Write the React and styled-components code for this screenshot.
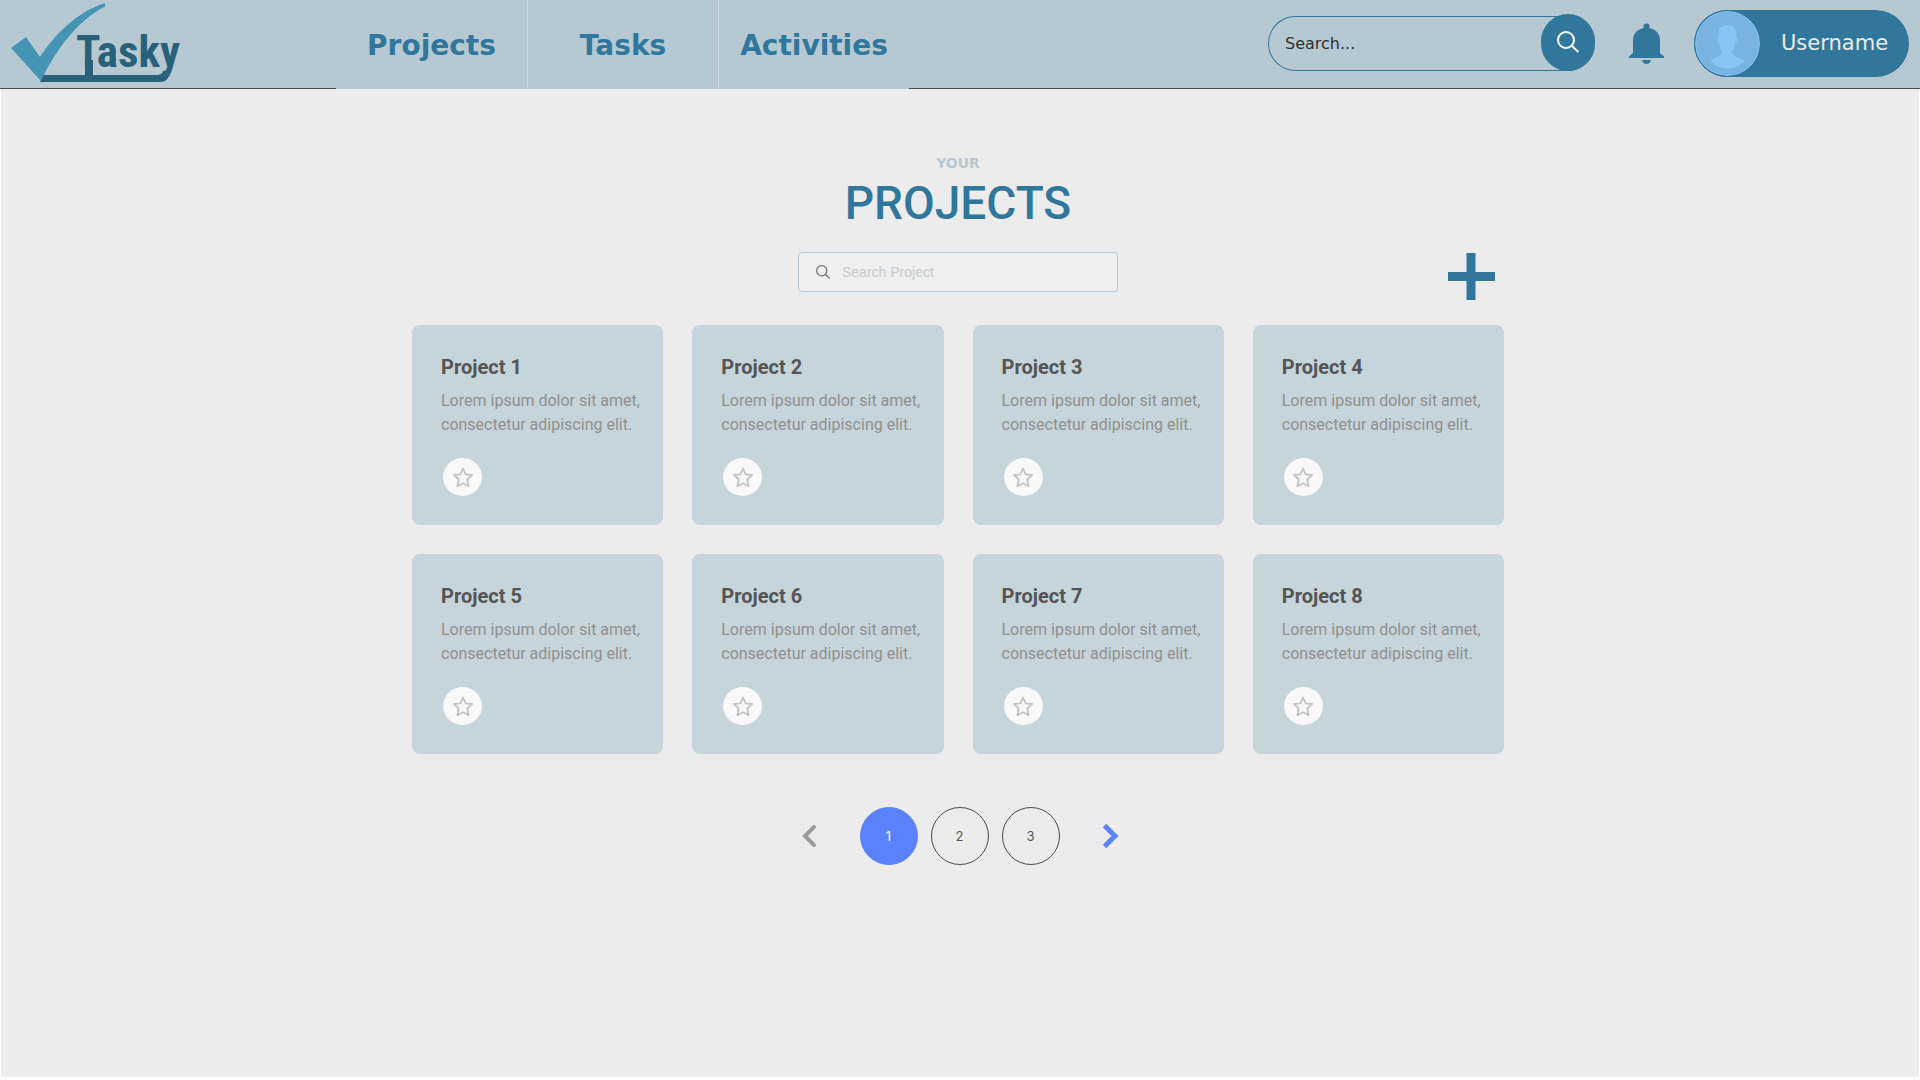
import React from "react";
import styled, { createGlobalStyle } from "styled-components";

const blue = "#31769b";
const haze = "#b6c9d2";
const uiFont = `"DejaVu Sans", Verdana, sans-serif`;
const textFont = `Roboto, sans-serif`;

const GlobalStyle = createGlobalStyle`
  *, *::before, *::after { box-sizing: border-box; }
  body { margin: 0; background: #fff; font-family: ${textFont}; }
  button, input { font: inherit; margin: 0; }
  button { padding: 0; border: 0; background: none; color: inherit; cursor: pointer; }
  h1, h2, p, ul { margin: 0; padding: 0; }
  ul { list-style: none; }
  svg { display: block; }
`;

const Page = styled.div`
  min-height: 100vh;
  display: flex;
  flex-direction: column;
`;

const Header = styled.header`
  height: 89px;
  display: flex;
  align-items: center;
  background: ${haze};
  border-bottom: 1px solid #4b4c53;
`;

const Brand = styled.a`
  flex: 0 0 336px;
`;

const Nav = styled.nav`
  align-self: stretch;
  display: flex;
  margin-bottom: -1px;
  background: ${haze};
`;

const NavLink = styled.a`
  width: 191px;
  display: flex;
  align-items: center;
  justify-content: center;
  padding-top: 2px;
  font: bold 28px/36px ${uiFont};
  color: ${blue};
  text-decoration: none;
  & + & { border-left: 1px solid #cdd6db; }
`;

const Tools = styled.div`
  display: flex;
  align-items: center;
  margin-left: auto;
  padding: 0 11px 2px 0;
`;

const HeaderSearch = styled.form`
  width: 327px;
  height: 55px;
  display: flex;
  align-items: flex-end;
  border: 1px solid ${blue};
  border-right: 0;
  border-radius: 28px;
`;

const HeaderInput = styled.input`
  flex: 1;
  min-width: 0;
  align-self: stretch;
  padding: 2px 16px 0;
  border: 0;
  outline: 0;
  background: none;
  font: 16px/20px ${uiFont};
  color: #2c2f33;
  &::placeholder { color: #2c2f33; opacity: 1; }
`;

const RoundSearch = styled.button`
  width: 54px;
  height: 57px;
  margin-bottom: -1px;
  display: flex;
  align-items: center;
  justify-content: center;
  border-radius: 27px;
  background: ${blue};
`;

const BellButton = styled.button`
  margin: 2px 30px 0 34px;
`;

const UserButton = styled.button`
  width: 215px;
  height: 67px;
  display: flex;
  align-items: center;
  border-radius: 34px;
  background: ${blue};
  color: #ececec;
  font: 21px/28px ${uiFont};
`;

const Avatar = styled.span`
  width: 67px;
  height: 67px;
  margin-right: 20px;
  border: 1px solid ${blue};
  border-radius: 50%;
  overflow: hidden;
`;

const Main = styled.main`
  flex: 1;
  display: flex;
  flex-direction: column;
  align-items: center;
  padding: 64px 4px 64px 0;
  background: #ececec;
  border: solid #fff;
  border-width: 0 1px 3px;
`;

const Eyebrow = styled.p`
  font: bold 14px/20px ${uiFont};
  color: ${haze};
`;

const Title = styled.h1`
  margin-top: 2px;
  font: 500 46px/56px ${textFont};
  color: ${blue};
`;

const Content = styled.section`
  width: 100%;
  max-width: 1092px;
`;

const ActionRow = styled.div`
  display: grid;
  grid-template-columns: 1fr 320px 1fr;
  align-items: start;
  margin: 21px 0 25px;
`;

const ProjectSearch = styled.label`
  grid-column: 2;
  height: 40px;
  display: flex;
  align-items: center;
  gap: 12px;
  padding: 0 17px;
  border: 1px solid #b2c9d6;
  border-radius: 4px;
  background: #efefef;
`;

const ProjectInput = styled.input`
  flex: 1;
  min-width: 0;
  padding: 0;
  border: 0;
  outline: 0;
  background: none;
  font: 14px/20px "Liberation Sans", Arial, sans-serif;
  color: #555;
  &::placeholder { color: #c6caca; opacity: 1; }
`;

const AddButton = styled.button`
  justify-self: end;
  margin-right: 9px;
`;

const Grid = styled.ul`
  display: grid;
  grid-template-columns: repeat(4, 1fr);
  gap: 29px;
`;

const Card = styled.li`
  min-height: 200px;
  padding: 28px 20px 28px 29px;
  border-radius: 8px;
  background: #c6d4db;
`;

const CardTitle = styled.h2`
  font: bold 20px/28px ${textFont};
  color: #555;
`;

const CardText = styled.p`
  margin: 8px 0 21px;
  font: 16px/24px ${textFont};
  color: #909090;
`;

const StarButton = styled.button`
  width: 39px;
  height: 38px;
  margin-left: 2px;
  display: flex;
  align-items: center;
  justify-content: center;
  border-radius: 50%;
  background: #f9f9f9;
`;

const Pager = styled.nav`
  display: flex;
  align-items: center;
  gap: 43px;
  margin-top: 53px;
  padding-left: 3px;
`;

const PageList = styled.ul`
  display: flex;
  gap: 13px;
`;

const PageButton = styled.button`
  width: 58px;
  height: 58px;
  border: 1px solid ${(p) => (p.$current ? "#5b82fc" : "#4a4a4a")};
  border-radius: 50%;
  background: ${(p) => (p.$current ? "#5b82fc" : "transparent")};
  color: ${(p) => (p.$current ? "#fff" : "#555")};
  font: 13px/20px Inter, sans-serif;
`;

const LogoWord = styled.text`
  font: bold 45px "Roboto Condensed", Roboto, sans-serif;
  fill: #29617a;
`;

function Logo() {
  return (
    <svg width="200" height="88" viewBox="0 0 200 88" role="img" aria-label="Tasky">
      <path d="M43 75H158Q161 75 163 72H171Q168 82 160 82H40Z" fill="#29617a" />
      <path d="M85 60H93V78H85Z" fill="#29617a" />
      <LogoWord x="76" y="67">Tasky</LogoWord>
      <path d="M11 48L26 37L40 57C55 34 77 12 105 3V6.500C80 19 57 47 41 81Z" fill="#4594b4" />
    </svg>
  );
}

const Magnifier = ({ size, color, stroke }) => (
  <svg width={size} height={size} viewBox="0 0 22 22" fill="none" stroke={color} strokeWidth={stroke} aria-hidden="true">
    <circle cx="9" cy="9" r="8" />
    <path d="M14.800 14.800L21.300 21" />
  </svg>
);

const Bell = () => (
  <svg width="35" height="42" viewBox="0 0 35 42" fill={blue} aria-hidden="true">
    <path d="M14.500 5V3.500a3 3 0 0 1 6 0V5C27 6.500 31 11 31 17V30L35 33.500V35H0V33.500L4 30V17C4 11 8 6.500 14.500 5Z" />
    <path d="M13 37H22Q21 41 17.500 41T13 37Z" />
  </svg>
);

const Person = () => (
  <svg width="65" height="65" viewBox="0 0 65 65" aria-hidden="true">
    <circle cx="32.500" cy="32.500" r="32" fill="#79b4e1" stroke="#8bc8f8" />
    <path
      d="M32 14C38 14 41.500 17 41 26Q43 27 42 30Q41 33 40 33C39 38 36.500 39 38 43C39.500 46 45 46 49.500 50C46 54 40 57.500 32.500 57.500S19 54 15.500 50C20 46 25 46 26.500 43C28 39 25 38 24 33Q22.500 33 22 30Q21.500 27 23.500 26C23 18 25 14 32 14Z"
      fill="#88c4f4"
    />
  </svg>
);

const Plus = () => (
  <svg width="48" height="48" viewBox="0 0 48 48" fill={blue} aria-hidden="true">
    <path d="M19.500 1H28.500V20H48V29H28.500V48H19.500V29H1V20H19.500Z" />
  </svg>
);

const Star = () => (
  <svg width="20" height="21" viewBox="0 0 20 21" fill="none" stroke="#c3c3c3" strokeWidth="1.8" strokeLinejoin="round" aria-hidden="true">
    <path d="M10 1.500L12.600 7.300L19 8L14.300 12.400L15.600 19.300L10 16.200L4.400 19.300L5.700 12.400L1 8L7.400 7.300Z" />
  </svg>
);

const PrevIcon = () => (
  <svg width="16" height="26" viewBox="0 0 16 26" fill="none" stroke="#989c9f" strokeWidth="4" aria-hidden="true">
    <path d="M13 4L4 13L13 22" strokeLinecap="round" />
  </svg>
);

const NextIcon = () => (
  <svg width="16" height="26" viewBox="0 0 16 26" fill="none" stroke="#5b82fc" strokeWidth="5" aria-hidden="true">
    <path d="M1.500 2.500L12 13L1.500 23.500" />
  </svg>
);

const links = ["Projects", "Tasks", "Activities"];
const projects = [1, 2, 3, 4, 5, 6, 7, 8];
const pages = [1, 2, 3];

export default function App() {
  return (
    <>
      <GlobalStyle />
      <Page>
        <Header>
          <Brand href="#home"><Logo /></Brand>
          <Nav>
            {links.map((name) => (
              <NavLink key={name} href={`#${name.toLowerCase()}`}>{name}</NavLink>
            ))}
          </Nav>
          <Tools>
            <HeaderSearch role="search">
              <HeaderInput type="text" aria-label="Search" placeholder="Search..." />
              <RoundSearch type="button" aria-label="Run search">
                <Magnifier size={22} color="#fff" stroke={2} />
              </RoundSearch>
            </HeaderSearch>
            <BellButton type="button" aria-label="Notifications"><Bell /></BellButton>
            <UserButton type="button">
              <Avatar><Person /></Avatar>
              Username
            </UserButton>
          </Tools>
        </Header>
        <Main>
          <Eyebrow>YOUR</Eyebrow>
          <Title>PROJECTS</Title>
          <Content>
            <ActionRow>
              <ProjectSearch>
                <Magnifier size={14} color="#6c7074" stroke={2} />
                <ProjectInput type="text" aria-label="Search project" placeholder="Search Project" />
              </ProjectSearch>
              <AddButton type="button" aria-label="Add project"><Plus /></AddButton>
            </ActionRow>
            <Grid>
              {projects.map((n) => (
                <Card key={n}>
                  <CardTitle>Project {n}</CardTitle>
                  <CardText>Lorem ipsum dolor sit amet, consectetur adipiscing elit.</CardText>
                  <StarButton type="button" aria-label={`Favourite project ${n}`}><Star /></StarButton>
                </Card>
              ))}
            </Grid>
          </Content>
          <Pager aria-label="Pages">
            <button type="button" aria-label="Previous page"><PrevIcon /></button>
            <PageList>
              {pages.map((n) => (
                <li key={n}><PageButton type="button" $current={n === 1}>{n}</PageButton></li>
              ))}
            </PageList>
            <button type="button" aria-label="Next page"><NextIcon /></button>
          </Pager>
        </Main>
      </Page>
    </>
  );
}
